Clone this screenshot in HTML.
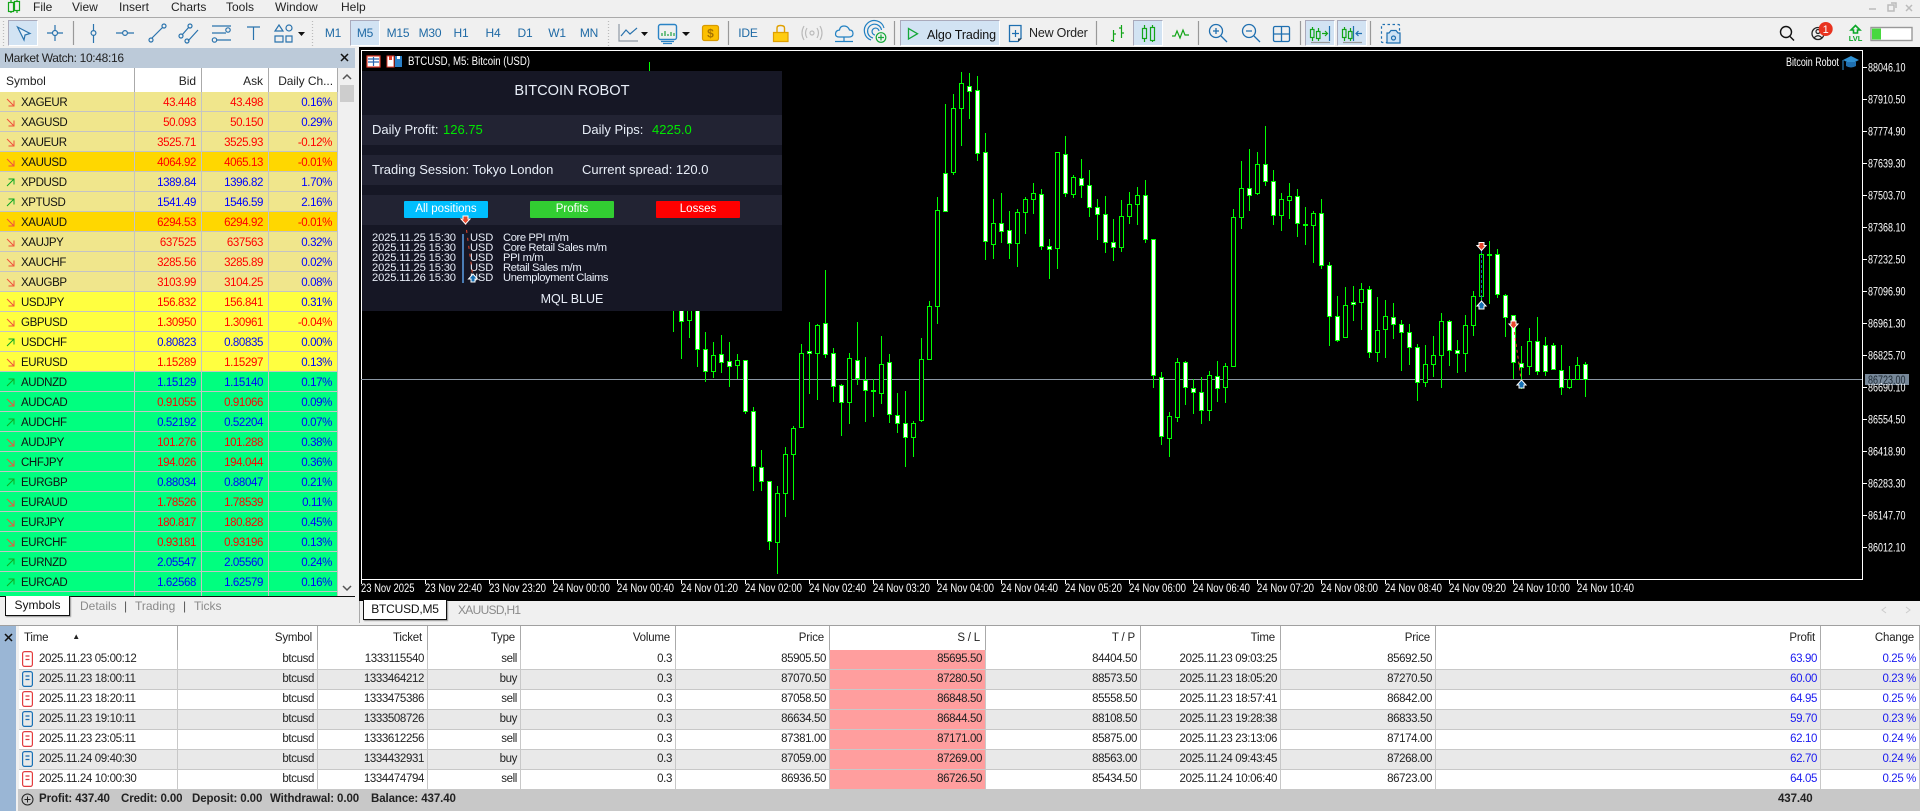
<!DOCTYPE html>
<html lang="en"><head><meta charset="utf-8"><title>MetaTrader 5 - BTCUSD,M5</title>
<style>
html,body{margin:0;padding:0;width:1920px;height:811px;overflow:hidden;background:#f0f0f0;font-family:"Liberation Sans",Arial,sans-serif;color:#1a1a1a}
.abs,.m,.tf{position:absolute}
.m{top:0;line-height:15px;font-size:12px;color:#222}
.tf{top:25px;line-height:16px;font-size:12px;color:#1f6aa5;transform:translateX(-50%);letter-spacing:-.2px}
.btn{position:absolute;top:20px;height:26px;background:#d2e3f3;border-top:1px solid #aab;border-left:1px solid #aab;border-right:1px solid #fff;border-bottom:1px solid #fff;box-sizing:border-box}
table{border-collapse:separate;border-spacing:0;table-layout:fixed;position:absolute}
td,th{box-sizing:border-box;padding:0;white-space:nowrap;overflow:hidden;font-weight:normal;font-size:11.5px;letter-spacing:-.38px}
#mw{left:0;top:68px;width:338px}
#mw th{height:24px;line-height:20px;background:#fff;border-right:1px solid #aaa;text-align:right;padding-right:5px;padding-top:1px;color:#222;font-size:12px;letter-spacing:-.05px}
#mw th:first-child{text-align:left;padding-left:6px}
#mw th:last-child{padding-right:4px}
#mw td{height:20px;line-height:16px;border-right:1px solid #c4c4c4;border-bottom:1px solid #c4c4c4;text-align:right;padding-right:5px;padding-top:3px;color:#00f}
#mw td:first-child{text-align:left;padding-left:6px;color:#111}
#mw tr.k td{background:#f0e68c}#mw tr.g td{background:#ffd700}#mw tr.y td{background:#ffff40}#mw tr.s td{background:#00ff7f}
#mw td.r{color:#f00}
#mw svg{width:9px;height:9px;vertical-align:-1px;margin-right:6px}
#tr{left:19px;top:626px;width:1901px}
#tr th{height:24px;background:#fff;border-right:1px solid #aaa;text-align:right;padding-right:5px;color:#222;border-bottom:0;letter-spacing:-.2px}
#tr th:first-child{text-align:left;padding-left:5px}
#tr td{height:20px;line-height:19px;background:#fff;border-right:1px solid #c8c8c8;border-bottom:1px solid #c8c8c8;text-align:right;padding-right:3px;color:#222}
#tr tr.e td{background:#e9e9e9}
#tr td:first-child{text-align:left;padding-left:3px}
#tr td.sl,#tr tr.e td.sl{background:#ff9e9e}
#tr td.b{color:#1a1af0}
#tr svg{width:11px;height:16px;vertical-align:middle;margin-right:6px}
.sum{position:absolute;top:789px;height:22px;line-height:21px;font-size:11.5px;font-weight:bold;letter-spacing:-.1px;color:#222}
.p{position:absolute;white-space:nowrap;color:#e8eef8;font-size:13px;line-height:16px}
.pb{position:absolute;top:201px;width:84px;height:17px;line-height:17px;text-align:center;color:#fff;font-size:11.5px;border-radius:1px}
.n{position:absolute;white-space:nowrap;color:#e8eef8;font-size:11.2px;line-height:10px;height:10px;letter-spacing:-.15px}
.n.nm{letter-spacing:-.39px}
.tab{position:absolute;font-size:12px;color:#8a8a8a;line-height:16px;top:598px}
</style></head><body>
<svg width="0" height="0" style="position:absolute"><defs>
<g id="dn" fill="none" stroke="#f0503c" stroke-width="1"><path d="M1 1L8 8M2.500 8H8V2.500"/></g>
<g id="up" fill="none" stroke="#10a820" stroke-width="1"><path d="M1 8L8 1M2.500 1H8V6.500"/></g>
<g id="rd" fill="none" stroke="#e23c3c" stroke-width="1.200"><rect x=".6" y=".6" width="9.800" height="14.800" rx="2"/><path d="M3.500 5H7.500M3.500 8.500H7.500"/></g>
<g id="bd" fill="none" stroke="#1670b4" stroke-width="1.200"><rect x=".6" y=".6" width="9.800" height="14.800" rx="2"/><path d="M3.500 5H7.500M3.500 8.500H7.500"/></g>
</defs></svg>

<!-- Menu -->
<span class="m" style="left:33px">File</span><span class="m" style="left:72px">View</span><span class="m" style="left:119px">Insert</span><span class="m" style="left:171px">Charts</span><span class="m" style="left:226px">Tools</span><span class="m" style="left:275px">Window</span><span class="m" style="left:341px">Help</span>
<div class="abs" style="left:0;top:17px;width:1920px;height:1px;background:#aaa"></div>

<!-- toolbar backgrounds -->
<div class="btn" style="left:8px;width:30px"></div>
<div class="btn" style="left:350px;width:30px"></div>
<div class="btn" style="left:900px;width:100px"></div>
<div class="btn" style="left:1133px;width:30px"></div>
<div class="btn" style="left:1305px;width:30px"></div>
<div class="btn" style="left:1337px;width:30px"></div>

<span class="tf" style="left:333px">M1</span><span class="tf" style="left:365px">M5</span><span class="tf" style="left:398px">M15</span><span class="tf" style="left:430px">M30</span><span class="tf" style="left:461px">H1</span><span class="tf" style="left:493px">H4</span><span class="tf" style="left:525px">D1</span><span class="tf" style="left:557px">W1</span><span class="tf" style="left:589px">MN</span>
<span class="tf" style="left:748px">IDE</span>
<span class="abs" style="left:927px;top:27px;font-size:12.5px;line-height:17px;color:#111;letter-spacing:-.1px">Algo Trading</span>
<span class="abs" style="left:1029px;top:25px;font-size:12.5px;line-height:17px;color:#222;letter-spacing:-.2px">New Order</span>

<svg class="abs" style="left:0;top:0" width="1920" height="48" fill="none" stroke-width="1.200">
<!-- logo -->
<g stroke="#12a518"><path d="M11 0V13M17 0V13"/><rect x="8.500" y="2.500" width="5" height="9" fill="#f0f0f0"/><rect x="14.500" y="1.500" width="5" height="9" fill="#f0f0f0"/></g>
<!-- window buttons -->
<g stroke="#bbb" stroke-width="1.500"><path d="M1869 9H1876"/><rect x="1888" y="5" width="6" height="6"/><path d="M1891 3H1896V8"/><path d="M1906 5L1912 11M1912 5L1906 11"/></g>
<!-- grips -->
<g stroke="#bbb" stroke-dasharray="1 2"><path d="M3.500 21V46M312.500 21V46M608.500 21V46"/></g>
<g stroke="#999"><path d="M73.500 21V45M728.500 21V45M894.500 21V45M1096.500 21V45M1198.500 21V45M1300.500 21V45M1370.500 21V45"/></g>
<g stroke="#2a73ad">
<path d="M17.500 27L30 33.500 25 35 24 40z" fill="#e3eef8"/>
<path d="M47 33H63M55 25V41"/><circle cx="55" cy="33" r="2.500" fill="#f0f0f0"/>
<path d="M93.500 24V43"/><circle cx="93.500" cy="33" r="2.400" fill="#f0f0f0"/>
<path d="M116 33H134"/><circle cx="125" cy="33" r="2.400" fill="#f0f0f0"/>
<path d="M152 38L163 27"/><circle cx="151" cy="40" r="2" fill="#f0f0f0"/><circle cx="164" cy="26" r="2" fill="#f0f0f0"/>
<path d="M182 35L189 27M188 41L198 30"/><circle cx="181" cy="36" r="2"/><circle cx="190" cy="26" r="2"/><circle cx="187" cy="41" r="2"/>
<path d="M212 26H231M212 33H226M217 40H231"/><circle cx="228" cy="30" r="2.200"/><circle cx="214.500" cy="40" r="2.200"/>
<path d="M247 27H260M253.500 27V40"/>
<path d="M279 25L283 31H275zM275 36H283V42H275zM286 36H292V42H286z"/><circle cx="289" cy="28" r="3"/>
</g>
<g fill="#111"><path d="M298 32H305L301.500 36zM641 32H648L644.500 36zM682 32H690L686 36z"/></g>
<!-- chart type -->
<g stroke="#8f9aa5"><path d="M619 24V41H638"/></g><path d="M621 36L626 30 630 34 637 28" stroke="#2a73ad"/>
<rect x="658.500" y="24.500" width="18" height="15" rx="2" stroke="#2a83c5" stroke-width="1.400"/><path d="M661 41.500H674M663 43.500H672" stroke="#2a83c5"/><path d="M662 36V33M665 36V31M668 36V34M671 36V32M674 36V33" stroke="#20a040"/>
<rect x="702.500" y="25.500" width="16" height="15" rx="2" fill="#fcc000" stroke="#d89a00"/><text x="710.500" y="37.500" font-family="Liberation Sans" font-size="12" font-weight="bold" fill="#a87400" stroke="none" text-anchor="middle">$</text>
<path d="M773.500 32.500H788V41.500H773.500z" fill="#ffcc10" stroke="#e0a000"/><path d="M777 33V28Q777 25.500 780.500 25.500Q784.500 25.500 784.500 28V33" stroke="#e0a000" stroke-width="1.400"/>
<g stroke="#bbb"><circle cx="812" cy="33" r="2"/><path d="M807 28Q804 33 807 38M817 28Q820 33 817 38M804 26Q800 33 804 40M820 26Q824 33 820 40"/></g>
<g stroke="#2180c2"><path d="M839 37H849Q853 37 853 33.500 853 30 849.500 30 848 26 844 26 840 26 839.500 30 835.500 30.500 835.500 34 835.500 37 839 37z"/><path d="M844 37V41M835 41.500H853"/></g>
<g stroke="#2180c2"><path d="M871 40A10 10 0 1 1 884 28M873 38A7 7 0 1 1 881.500 30M875 35A3.500 3.500 0 1 1 879 31"/></g><circle cx="881" cy="37.500" r="4.800" stroke="#14a838" fill="#f0f0f0"/><path d="M881 34.500V40.500M878 37.500H884" stroke="#14a838"/>
<path d="M908.500 28.500V39L917.500 33.700z" stroke="#14a838" stroke-width="1.300"/>
<path d="M1009.500 25.500H1021V38L1018 41.500H1009.500z" stroke="#1f6fb0" stroke-width="1.300"/><path d="M1015.500 30V37M1012 33.500H1019" stroke="#1f6fb0"/><path d="M1018 42L1022 38.500H1018z" fill="#26445e"/>
<g stroke="#12a518"><path d="M1113.500 30V42M1111 40.500H1113.500M1113.500 34H1116M1121.500 25V38M1119 28H1121.500M1121.500 33H1124"/><path d="M1144.500 25V42M1152.500 25V42"/><rect x="1142.500" y="28.500" width="4" height="10" fill="#d2e3f3"/><rect x="1150.500" y="27.500" width="4" height="13" fill="#d2e3f3"/><path d="M1172 36H1175L1177 31 1180 38 1183 30 1185 35H1189"/></g>
<g stroke="#1f6fb0" stroke-width="1.300"><circle cx="1216" cy="31" r="6.500"/><path d="M1221 36L1227 42M1213 31H1219M1216 28V34"/><circle cx="1249" cy="31" r="6.500"/><path d="M1254 36L1260 42M1246 31H1252"/><rect x="1273.500" y="26.500" width="16" height="15" rx="1.500"/><path d="M1281.500 26.500V41.500M1273.500 34H1289.500"/></g>
<g stroke="#12a518"><path d="M1312.500 27V41M1318.500 28V41"/><rect x="1310.500" y="29.500" width="3.500" height="8" fill="#d2e3f3"/><rect x="1316.500" y="31.500" width="3.500" height="7" fill="#d2e3f3"/><path d="M1322 33.500H1327M1325 31L1327.500 33.500 1325 36"/></g><path d="M1329.500 26V41" stroke="#1f6fb0"/><path d="M1311 42.500H1330" stroke="#999"/>
<g stroke="#12a518"><path d="M1344.500 27V41M1350.500 28V41"/><rect x="1342.500" y="29.500" width="3.500" height="8" fill="#d2e3f3"/><rect x="1348.500" y="31.500" width="3.500" height="7" fill="#d2e3f3"/></g><path d="M1353.500 26V41M1356 33.500H1362M1358.500 31L1356 33.500 1358.500 36" stroke="#1f6fb0"/><path d="M1343 42.500H1362" stroke="#999"/>
<rect x="1381.500" y="24.500" width="18" height="18" rx="1" stroke="#1f6fb0" stroke-dasharray="2.500 2.500"/><path d="M1387 33H1389L1391 30.500H1396L1398 33H1400V43H1387z" fill="#cfe3f4" stroke="#1f6fb0"/><circle cx="1393.500" cy="38" r="2" stroke="#1f6fb0"/>
<circle cx="1786" cy="32" r="5.500" stroke="#111" stroke-width="1.400"/><path d="M1790 36.500L1794 40.500" stroke="#111" stroke-width="1.400"/>
<circle cx="1818" cy="33.500" r="6" stroke="#222" stroke-width="1.300"/><circle cx="1818" cy="31.500" r="2" stroke="#222"/><path d="M1814 38Q1818 33.500 1822 38" stroke="#222"/>
<circle cx="1825.700" cy="29" r="7" fill="#e8331f" stroke="none"/><text x="1825.700" y="33" font-family="Liberation Sans" font-size="11" fill="#fff" stroke="none" text-anchor="middle">1</text>
<path d="M1855.500 25.500L1851 30H1853.500V33H1857.500V30H1860z" stroke="#0ca828" stroke-width="1.600"/>
<text x="1855.500" y="41" font-family="Liberation Sans" font-size="7.500" font-weight="bold" fill="#0ca828" stroke="none" text-anchor="middle">LVL</text>
<rect x="1871" y="27.500" width="41" height="13" fill="#fff" stroke="#999" stroke-width="1.400"/><rect x="1872" y="28.500" width="9" height="11" fill="#47d83e" stroke="none"/>
</svg>

<!-- Market watch -->
<div class="abs" style="left:0;top:48px;width:355px;height:20px;background:#bccad9;font-size:12px;line-height:20px;text-indent:4px;color:#222;letter-spacing:-.33px">Market Watch: 10:48:16</div>
<svg class="abs" style="left:340px;top:53px" width="10" height="10"><path d="M1 1L8 8M8 1L1 8" stroke="#111" stroke-width="1.500"/></svg>
<div class="abs" style="left:0;top:68px;width:338px;height:528px;overflow:hidden">
<table id="mw" style="left:0;top:0">
<colgroup><col style="width:135px"><col style="width:67px"><col style="width:67px"><col style="width:69px"></colgroup>
<tr><th>Symbol</th><th>Bid</th><th>Ask</th><th>Daily Ch...</th></tr>
<tr class="k"><td><svg><use href="#dn"/></svg>XAGEUR</td><td class="r">43.448</td><td class="r">43.498</td><td>0.16%</td></tr>
<tr class="k"><td><svg><use href="#dn"/></svg>XAGUSD</td><td class="r">50.093</td><td class="r">50.150</td><td>0.29%</td></tr>
<tr class="k"><td><svg><use href="#dn"/></svg>XAUEUR</td><td class="r">3525.71</td><td class="r">3525.93</td><td class="r">-0.12%</td></tr>
<tr class="g"><td><svg><use href="#dn"/></svg>XAUUSD</td><td class="r">4064.92</td><td class="r">4065.13</td><td class="r">-0.01%</td></tr>
<tr class="k"><td><svg><use href="#up"/></svg>XPDUSD</td><td>1389.84</td><td>1396.82</td><td>1.70%</td></tr>
<tr class="k"><td><svg><use href="#up"/></svg>XPTUSD</td><td>1541.49</td><td>1546.59</td><td>2.16%</td></tr>
<tr class="g"><td><svg><use href="#dn"/></svg>XAUAUD</td><td class="r">6294.53</td><td class="r">6294.92</td><td class="r">-0.01%</td></tr>
<tr class="k"><td><svg><use href="#dn"/></svg>XAUJPY</td><td class="r">637525</td><td class="r">637563</td><td>0.32%</td></tr>
<tr class="k"><td><svg><use href="#dn"/></svg>XAUCHF</td><td class="r">3285.56</td><td class="r">3285.89</td><td>0.02%</td></tr>
<tr class="k"><td><svg><use href="#dn"/></svg>XAUGBP</td><td class="r">3103.99</td><td class="r">3104.25</td><td>0.08%</td></tr>
<tr class="y"><td><svg><use href="#dn"/></svg>USDJPY</td><td class="r">156.832</td><td class="r">156.841</td><td>0.31%</td></tr>
<tr class="y"><td><svg><use href="#dn"/></svg>GBPUSD</td><td class="r">1.30950</td><td class="r">1.30961</td><td class="r">-0.04%</td></tr>
<tr class="y"><td><svg><use href="#up"/></svg>USDCHF</td><td>0.80823</td><td>0.80835</td><td>0.00%</td></tr>
<tr class="y"><td><svg><use href="#dn"/></svg>EURUSD</td><td class="r">1.15289</td><td class="r">1.15297</td><td>0.13%</td></tr>
<tr class="s"><td><svg><use href="#up"/></svg>AUDNZD</td><td>1.15129</td><td>1.15140</td><td>0.17%</td></tr>
<tr class="s"><td><svg><use href="#dn"/></svg>AUDCAD</td><td class="r">0.91055</td><td class="r">0.91066</td><td>0.09%</td></tr>
<tr class="s"><td><svg><use href="#up"/></svg>AUDCHF</td><td>0.52192</td><td>0.52204</td><td>0.07%</td></tr>
<tr class="s"><td><svg><use href="#dn"/></svg>AUDJPY</td><td class="r">101.276</td><td class="r">101.288</td><td>0.38%</td></tr>
<tr class="s"><td><svg><use href="#dn"/></svg>CHFJPY</td><td class="r">194.026</td><td class="r">194.044</td><td>0.36%</td></tr>
<tr class="s"><td><svg><use href="#up"/></svg>EURGBP</td><td>0.88034</td><td>0.88047</td><td>0.21%</td></tr>
<tr class="s"><td><svg><use href="#dn"/></svg>EURAUD</td><td class="r">1.78526</td><td class="r">1.78539</td><td>0.11%</td></tr>
<tr class="s"><td><svg><use href="#dn"/></svg>EURJPY</td><td class="r">180.817</td><td class="r">180.828</td><td>0.45%</td></tr>
<tr class="s"><td><svg><use href="#dn"/></svg>EURCHF</td><td class="r">0.93181</td><td class="r">0.93196</td><td>0.13%</td></tr>
<tr class="s"><td><svg><use href="#up"/></svg>EURNZD</td><td>2.05547</td><td>2.05560</td><td>0.24%</td></tr>
<tr class="s"><td><svg><use href="#up"/></svg>EURCAD</td><td>1.62568</td><td>1.62579</td><td>0.16%</td></tr>
<tr class="s"><td>&nbsp;</td><td>&nbsp;</td><td>&nbsp;</td><td>&nbsp;</td></tr>
</table></div>
<div class="abs" style="left:340px;top:85px;width:14px;height:17px;background:#cdcdcd"></div>
<svg class="abs" style="left:342px;top:72px" width="10" height="10"><path d="M1 7L5 3 9 7" stroke="#555" stroke-width="1.500" fill="none"/></svg>
<svg class="abs" style="left:342px;top:583px" width="10" height="10"><path d="M1 3L5 7 9 3" stroke="#555" stroke-width="1.500" fill="none"/></svg>

<!-- left tabs -->
<div class="abs" style="left:0;top:596px;width:355px;height:1px;background:#111"></div>
<div class="abs" style="left:5px;top:596px;width:65px;height:20px;box-sizing:border-box;background:#fff;border:1px solid #111;border-top:0;box-shadow:1px 1px 1px #999;text-align:center;font-size:12px;line-height:18px;color:#111">Symbols</div>
<span class="tab" style="left:80px">Details</span><span class="tab" style="left:124px;color:#555">|</span><span class="tab" style="left:135px">Trading</span><span class="tab" style="left:183px;color:#555">|</span><span class="tab" style="left:194px">Ticks</span>

<!-- Chart -->
<svg class="abs" style="left:359px;top:47px" width="1561" height="554" viewBox="359 47 1561 554" shape-rendering="crispEdges">
<rect x="359" y="47" width="1561" height="554" fill="#000"/>
<path d="M361.500 50.500H1862.500V579.500H361.500z" fill="none" stroke="#fff" stroke-width="1"/>
<path d="M361 379.500H1862" stroke="#8a96a3"/>
<path fill="none" stroke="#00ff00" d="M649.500 62V71M673.500 300V332M681.500 300V359M689.500 300V338M697.500 300V367M705.500 332V382M713.500 342V378M721.500 335V373M729.500 342V387M737.500 354V379M745.500 360V414M753.500 407V491M761.500 450V491M769.500 481V550M777.500 486V574M785.500 447V517M793.500 426V500M801.500 344V428M809.500 322V394M817.500 324V400M825.500 270V358M833.500 348V402M841.500 384V436M849.500 353V424M857.500 322V385M865.500 357V422M873.500 379V417M881.500 336V404M889.500 354V423M897.500 393V433M905.500 391V467M913.500 421V457M921.500 338V422M929.500 301V360M937.500 197V324M945.500 104V212M953.500 94V175M961.500 72V146M969.500 73V119M977.500 76V161M985.500 133V260M993.500 199V259M1001.500 193V243M1009.500 211V259M1017.500 209V267M1025.500 197V234M1033.500 183V214M1041.500 189V250M1049.500 239V279M1057.500 152V269M1065.500 136V197M1073.500 175V198M1081.500 159V198M1089.500 170V217M1097.500 199V240M1105.500 196V253M1113.500 219V261M1121.500 200V252M1129.500 192V224M1137.500 187V225M1145.500 180V243M1153.500 239V388M1161.500 372V445M1169.500 412V457M1177.500 358V422M1185.500 361V405M1193.500 379V414M1201.500 377V424M1209.500 371V421M1217.500 361V402M1225.500 363V403M1233.500 209V367M1241.500 161V229M1249.500 149V211M1257.500 152V195M1265.500 126V186M1273.500 170V225M1281.500 193V231M1289.500 183V219M1297.500 189V237M1305.500 207V245M1313.500 211V263M1321.500 199V269M1329.500 262V346M1337.500 296V342M1345.500 287V338M1353.500 286V321M1361.500 283V330M1369.500 286V358M1377.500 297V362M1385.500 300V358M1393.500 303V339M1401.500 320V371M1409.500 324V365M1417.500 344V401M1425.500 345V387M1433.500 336V377M1441.500 313V388M1449.500 320V366M1457.500 340V373M1465.500 315V372M1473.500 291V336M1481.500 250V308M1489.500 241V304M1497.500 249V298M1505.500 294V337M1513.500 315V379M1521.500 346V389M1529.500 328V375M1537.500 317V375M1545.500 337V376M1553.500 343V370M1561.500 345V395M1569.500 366V389M1577.500 357V380M1585.500 362V397"/>
<path fill="#000" stroke="#00ff00" d="M687.500 300.500h4V320.500h-4zM711.500 355.500h4V371.500h-4zM735.500 360.500h4V365.500h-4zM775.500 493.500h4V542.500h-4zM783.500 454.500h4V493.500h-4zM791.500 428.500h4V454.500h-4zM799.500 353.500h4V427.500h-4zM815.500 325.500h4V353.500h-4zM847.500 358.500h4V402.500h-4zM879.500 364.500h4V393.500h-4zM911.500 423.500h4V437.500h-4zM919.500 359.500h4V420.500h-4zM927.500 306.500h4V359.500h-4zM935.500 210.500h4V306.500h-4zM951.500 108.500h4V172.500h-4zM959.500 83.500h4V108.500h-4zM991.500 223.500h4V244.500h-4zM1015.500 212.500h4V243.500h-4zM1023.500 199.500h4V212.500h-4zM1031.500 193.500h4V199.500h-4zM1055.500 152.500h4V248.500h-4zM1071.500 177.500h4V194.500h-4zM1119.500 216.500h4V247.500h-4zM1127.500 204.500h4V216.500h-4zM1135.500 195.500h4V204.500h-4zM1167.500 416.500h4V438.500h-4zM1175.500 362.500h4V417.500h-4zM1207.500 375.500h4V410.500h-4zM1223.500 366.500h4V387.500h-4zM1231.500 217.500h4V366.500h-4zM1239.500 188.500h4V217.500h-4zM1255.500 164.500h4V193.500h-4zM1279.500 199.500h4V215.500h-4zM1287.500 196.500h4V200.500h-4zM1311.500 213.500h4V225.500h-4zM1343.500 305.500h4V337.500h-4zM1359.500 289.500h4V302.500h-4zM1375.500 330.500h4V352.500h-4zM1383.500 316.500h4V329.500h-4zM1423.500 364.500h4V382.500h-4zM1431.500 355.500h4V364.500h-4zM1439.500 321.500h4V355.500h-4zM1463.500 325.500h4V353.500h-4zM1471.500 296.500h4V325.500h-4zM1479.500 254.500h4V296.500h-4zM1527.500 341.500h4V366.500h-4zM1567.500 379.500h4V387.500h-4zM1575.500 365.500h4V379.500h-4z"/>
<path fill="#fff" stroke="#00ff00" d="M679.500 300.500h4V321.500h-4zM695.500 300.500h4V349.500h-4zM703.500 349.500h4V371.500h-4zM719.500 354.500h4V362.500h-4zM727.500 361.500h4V366.500h-4zM743.500 360.500h4V411.500h-4zM751.500 411.500h4V466.500h-4zM759.500 467.500h4V481.500h-4zM767.500 481.500h4V541.500h-4zM807.500 351.500h4V353.500h-4zM823.500 323.500h4V354.500h-4zM831.500 353.500h4V386.500h-4zM839.500 385.500h4V402.500h-4zM855.500 360.500h4V378.500h-4zM863.500 380.500h4V390.500h-4zM871.500 390.500h4V391.500h-4zM887.500 362.500h4V414.500h-4zM895.500 415.500h4V423.500h-4zM903.500 423.500h4V437.500h-4zM943.500 173.500h4V211.500h-4zM967.500 86.500h4V91.500h-4zM975.500 90.500h4V153.500h-4zM983.500 152.500h4V241.500h-4zM999.500 223.500h4V231.500h-4zM1007.500 230.500h4V243.500h-4zM1039.500 194.500h4V246.500h-4zM1047.500 246.500h4V249.500h-4zM1063.500 154.500h4V193.500h-4zM1079.500 178.500h4V185.500h-4zM1087.500 185.500h4V207.500h-4zM1095.500 207.500h4V214.500h-4zM1103.500 214.500h4V242.500h-4zM1111.500 242.500h4V247.500h-4zM1143.500 195.500h4V239.500h-4zM1151.500 239.500h4V375.500h-4zM1159.500 377.500h4V436.500h-4zM1183.500 362.500h4V387.500h-4zM1191.500 388.500h4V392.500h-4zM1199.500 392.500h4V410.500h-4zM1215.500 376.500h4V388.500h-4zM1247.500 188.500h4V195.500h-4zM1263.500 164.500h4V181.500h-4zM1271.500 181.500h4V215.500h-4zM1295.500 196.500h4V223.500h-4zM1303.500 224.500h4V225.500h-4zM1319.500 213.500h4V265.500h-4zM1327.500 265.500h4V316.500h-4zM1335.500 316.500h4V340.500h-4zM1351.500 302.500h4V304.500h-4zM1367.500 289.500h4V352.500h-4zM1391.500 317.500h4V324.500h-4zM1399.500 324.500h4V332.500h-4zM1407.500 332.500h4V347.500h-4zM1415.500 347.500h4V382.500h-4zM1447.500 321.500h4V350.500h-4zM1455.500 350.500h4V353.500h-4zM1487.500 254.500h4V255.500h-4zM1495.500 254.500h4V294.500h-4zM1503.500 295.500h4V317.500h-4zM1511.500 315.500h4V362.500h-4zM1519.500 363.500h4V367.500h-4zM1535.500 341.500h4V371.500h-4zM1543.500 345.500h4V371.500h-4zM1551.500 345.500h4V369.500h-4zM1559.500 370.500h4V387.500h-4zM1583.500 364.500h4V379.500h-4z"/>
<!-- axis ticks -->
<path stroke="#fff" d="M1863 67.500h4M1863 99.500h4M1863 131.500h4M1863 163.500h4M1863 195.500h4M1863 227.500h4M1863 259.500h4M1863 291.500h4M1863 323.500h4M1863 355.500h4M1863 387.500h4M1863 419.500h4M1863 451.500h4M1863 483.500h4M1863 515.500h4M1863 547.500h4M361.500 580v4M425.500 580v4M489.500 580v4M553.500 580v4M617.500 580v4M681.500 580v4M745.500 580v4M809.500 580v4M873.500 580v4M937.500 580v4M1001.500 580v4M1065.500 580v4M1129.500 580v4M1193.500 580v4M1257.500 580v4M1321.500 580v4M1385.500 580v4M1449.500 580v4M1513.500 580v4M1577.500 580v4"/>
<rect x="1865" y="374" width="44" height="11" fill="#778899"/>
<g font-family="Liberation Sans" font-size="11.500" fill="#fff" shape-rendering="auto">
<text x="1868" y="71.500" textLength="37.500" lengthAdjust="spacingAndGlyphs">88046.10</text>
<text x="1868" y="103.500" textLength="37.500" lengthAdjust="spacingAndGlyphs">87910.50</text>
<text x="1868" y="135.500" textLength="37.500" lengthAdjust="spacingAndGlyphs">87774.90</text>
<text x="1868" y="167.500" textLength="37.500" lengthAdjust="spacingAndGlyphs">87639.30</text>
<text x="1868" y="199.500" textLength="37.500" lengthAdjust="spacingAndGlyphs">87503.70</text>
<text x="1868" y="231.500" textLength="37.500" lengthAdjust="spacingAndGlyphs">87368.10</text>
<text x="1868" y="263.500" textLength="37.500" lengthAdjust="spacingAndGlyphs">87232.50</text>
<text x="1868" y="295.500" textLength="37.500" lengthAdjust="spacingAndGlyphs">87096.90</text>
<text x="1868" y="327.500" textLength="37.500" lengthAdjust="spacingAndGlyphs">86961.30</text>
<text x="1868" y="359.500" textLength="37.500" lengthAdjust="spacingAndGlyphs">86825.70</text>
<text x="1868" y="391.500" textLength="37.500" lengthAdjust="spacingAndGlyphs">86690.10</text>
<text x="1868" y="423.500" textLength="37.500" lengthAdjust="spacingAndGlyphs">86554.50</text>
<text x="1868" y="455.500" textLength="37.500" lengthAdjust="spacingAndGlyphs">86418.90</text>
<text x="1868" y="487.500" textLength="37.500" lengthAdjust="spacingAndGlyphs">86283.30</text>
<text x="1868" y="519.500" textLength="37.500" lengthAdjust="spacingAndGlyphs">86147.70</text>
<text x="1868" y="551.500" textLength="37.500" lengthAdjust="spacingAndGlyphs">86012.10</text>
<text x="1868" y="384" fill="#1e2a36" textLength="37.500" lengthAdjust="spacingAndGlyphs">86723.00</text>
<text x="361" y="592" textLength="53.500" lengthAdjust="spacingAndGlyphs">23 Nov 2025</text>
<text x="425" y="592" textLength="57" lengthAdjust="spacingAndGlyphs">23 Nov 22:40</text>
<text x="489" y="592" textLength="57" lengthAdjust="spacingAndGlyphs">23 Nov 23:20</text>
<text x="553" y="592" textLength="57" lengthAdjust="spacingAndGlyphs">24 Nov 00:00</text>
<text x="617" y="592" textLength="57" lengthAdjust="spacingAndGlyphs">24 Nov 00:40</text>
<text x="681" y="592" textLength="57" lengthAdjust="spacingAndGlyphs">24 Nov 01:20</text>
<text x="745" y="592" textLength="57" lengthAdjust="spacingAndGlyphs">24 Nov 02:00</text>
<text x="809" y="592" textLength="57" lengthAdjust="spacingAndGlyphs">24 Nov 02:40</text>
<text x="873" y="592" textLength="57" lengthAdjust="spacingAndGlyphs">24 Nov 03:20</text>
<text x="937" y="592" textLength="57" lengthAdjust="spacingAndGlyphs">24 Nov 04:00</text>
<text x="1001" y="592" textLength="57" lengthAdjust="spacingAndGlyphs">24 Nov 04:40</text>
<text x="1065" y="592" textLength="57" lengthAdjust="spacingAndGlyphs">24 Nov 05:20</text>
<text x="1129" y="592" textLength="57" lengthAdjust="spacingAndGlyphs">24 Nov 06:00</text>
<text x="1193" y="592" textLength="57" lengthAdjust="spacingAndGlyphs">24 Nov 06:40</text>
<text x="1257" y="592" textLength="57" lengthAdjust="spacingAndGlyphs">24 Nov 07:20</text>
<text x="1321" y="592" textLength="57" lengthAdjust="spacingAndGlyphs">24 Nov 08:00</text>
<text x="1385" y="592" textLength="57" lengthAdjust="spacingAndGlyphs">24 Nov 08:40</text>
<text x="1449" y="592" textLength="57" lengthAdjust="spacingAndGlyphs">24 Nov 09:20</text>
<text x="1513" y="592" textLength="57" lengthAdjust="spacingAndGlyphs">24 Nov 10:00</text>
<text x="1577" y="592" textLength="57" lengthAdjust="spacingAndGlyphs">24 Nov 10:40</text>
<text x="408" y="65" textLength="122" lengthAdjust="spacingAndGlyphs">BTCUSD, M5:  Bitcoin (USD)</text>
<text x="1786" y="66" textLength="53" lengthAdjust="spacingAndGlyphs">Bitcoin Robot</text>
</g>
<!-- title icons -->
<g shape-rendering="auto">
<rect x="367" y="56" width="13" height="11" fill="#fff" stroke="#e23c2c" stroke-width="1.200"/><path d="M368 59H379M368 62H379M373.500 57V66" stroke="#2a66b0" stroke-width="1.200"/>
<rect x="387" y="56" width="7" height="11" fill="#fff" stroke="#e23c2c"/><rect x="395" y="56" width="7" height="11" fill="#2a80c8"/><path d="M389 56V60H392V56" fill="#e23c2c"/><rect x="397" y="56" width="3" height="3" fill="#fff"/>
<path d="M1851 56L1859 60 1851 64 1843 60z" fill="#2f8fd0"/><path d="M1846 62V66Q1851 69 1856 66V62" fill="#2070b0"/><path d="M1843 60V70" stroke="#2f8fd0"/>
</g>
</svg>

<!-- Info panel -->
<div class="abs" style="left:362px;top:71px;width:420px;height:240px;background:#161725"></div>
<div class="abs" style="left:362px;top:115px;width:420px;height:30px;background:#222333"></div>
<div class="abs" style="left:362px;top:155px;width:420px;height:30px;background:#222333"></div>
<div class="abs" style="left:362px;top:195px;width:420px;height:30px;background:#222333"></div>
<span class="p" style="left:362px;width:420px;top:83px;text-align:center;font-size:14.600px">BITCOIN ROBOT</span>
<span class="p" style="left:372px;top:122px">Daily Profit:</span><span class="p" style="left:443px;top:122px;color:#00e800">126.75</span>
<span class="p" style="left:582px;top:122px">Daily Pips:</span><span class="p" style="left:652px;top:122px;color:#00e800">4225.0</span>
<span class="p" style="left:372px;top:162px">Trading Session: Tokyo London</span>
<span class="p" style="left:582px;top:162px">Current spread: 120.0</span>
<div class="pb" style="left:404px;background:#00bfff">All positions</div>
<div class="pb" style="left:530px;background:#32cd32">Profits</div>
<div class="pb" style="left:656px;background:#f00">Losses</div>
<span class="n" style="left:372px;top:233px">2025.11.25 15:30</span><span class="n" style="left:470px;top:233px">USD</span><span class="n nm" style="left:503px;top:233px">Core PPI m/m</span>
<span class="n" style="left:372px;top:243px">2025.11.25 15:30</span><span class="n" style="left:470px;top:243px">USD</span><span class="n nm" style="left:503px;top:243px">Core Retail Sales m/m</span>
<span class="n" style="left:372px;top:253px">2025.11.25 15:30</span><span class="n" style="left:470px;top:253px">USD</span><span class="n nm" style="left:503px;top:253px">PPI m/m</span>
<span class="n" style="left:372px;top:263px">2025.11.25 15:30</span><span class="n" style="left:470px;top:263px">USD</span><span class="n nm" style="left:503px;top:263px">Retail Sales m/m</span>
<span class="n" style="left:372px;top:273px">2025.11.26 15:30</span><span class="n" style="left:470px;top:273px">USD</span><span class="n nm" style="left:503px;top:273px">Unemployment Claims</span>
<span class="p" style="left:362px;width:420px;top:291px;text-align:center;font-size:12.500px">MQL BLUE</span>

<!-- markers overlay -->
<svg class="abs" style="left:0;top:0" width="1920" height="600">
<path d="M463 234V283" stroke="#4a7db5" stroke-width="2"/>
<path d="M465.500 222L473 278" stroke="#e8482c" stroke-dasharray="3 5"/>
<path d="M1481.500 250V303" stroke="#1670b4" stroke-dasharray="3 2"/>
<path d="M1513.500 326L1521.500 382" stroke="#e8482c" stroke-dasharray="3 3"/>
<g stroke="#fff" stroke-width="1"><path d="M463 216H468V219H470L465.500 224 461 219H463z" fill="#e8482c"/><path d="M1479 242.500H1484V245.500H1486L1481.500 250.500 1477 245.500H1479z" fill="#e8482c"/><path d="M1511 321H1516V324H1518L1513.500 329 1509 324H1511z" fill="#e8482c"/>
<path d="M473 274L477.500 279H475V282H471V279H468.500z" fill="#1670b4"/><path d="M1481.500 301L1486 306H1484V309H1479V306H1477z" fill="#1670b4"/><path d="M1521.500 380L1526 385H1524V388H1519V385H1517z" fill="#1670b4"/></g>
</svg>

<!-- chart tabs -->
<div class="abs" style="left:363px;top:600px;width:84px;height:20px;box-sizing:border-box;background:#fff;border:1px solid #111;border-top:0;box-shadow:1px 1px 1px #999;text-align:center;font-size:12px;line-height:18px;color:#111;letter-spacing:-.2px">BTCUSD,M5</div>
<span class="tab" style="left:458px;top:602px;letter-spacing:-.7px">XAUUSD,H1</span>
<div class="abs" style="left:359px;top:601px;width:1px;height:22px;background:#aaa"></div>
<svg class="abs" style="left:1880px;top:605px" width="32" height="10"><path d="M6 2L2 5 6 8M26 2L30 5 26 8" stroke="#ccc" fill="none"/></svg>

<!-- toolbox -->
<div class="abs" style="left:0;top:625px;width:1920px;height:1px;background:#a0a0a0"></div>
<div class="abs" style="left:0;top:626px;width:16px;height:185px;background:#9ab6d5"></div>
<svg class="abs" style="left:4px;top:633px" width="10" height="10"><path d="M1 1L8 8M8 1L1 8" stroke="#111" stroke-width="1.500"/></svg>
<table id="tr">
<colgroup><col style="width:159px"><col style="width:140px"><col style="width:110px"><col style="width:93px"><col style="width:155px"><col style="width:154px"><col style="width:156px"><col style="width:155px"><col style="width:140px"><col style="width:155px"><col style="width:385px"><col style="width:99px"></colgroup>
<tr><th>Time&nbsp;&nbsp;&nbsp;&nbsp;&nbsp;&nbsp;&nbsp;&nbsp;<span style="font-size:8px;vertical-align:2px">▲</span></th><th>Symbol</th><th>Ticket</th><th>Type</th><th>Volume</th><th>Price</th><th>S / L</th><th>T / P</th><th>Time</th><th>Price</th><th>Profit</th><th>Change</th></tr>
<tr><td><svg><use href="#rd"/></svg>2025.11.23 05:00:12</td><td>btcusd</td><td>1333115540</td><td>sell</td><td>0.3</td><td>85905.50</td><td class="sl">85695.50</td><td>84404.50</td><td>2025.11.23 09:03:25</td><td>85692.50</td><td class="b">63.90</td><td class="b">0.25 %</td></tr>
<tr class="e"><td><svg><use href="#bd"/></svg>2025.11.23 18:00:11</td><td>btcusd</td><td>1333464212</td><td>buy</td><td>0.3</td><td>87070.50</td><td class="sl">87280.50</td><td>88573.50</td><td>2025.11.23 18:05:20</td><td>87270.50</td><td class="b">60.00</td><td class="b">0.23 %</td></tr>
<tr><td><svg><use href="#rd"/></svg>2025.11.23 18:20:11</td><td>btcusd</td><td>1333475386</td><td>sell</td><td>0.3</td><td>87058.50</td><td class="sl">86848.50</td><td>85558.50</td><td>2025.11.23 18:57:41</td><td>86842.00</td><td class="b">64.95</td><td class="b">0.25 %</td></tr>
<tr class="e"><td><svg><use href="#bd"/></svg>2025.11.23 19:10:11</td><td>btcusd</td><td>1333508726</td><td>buy</td><td>0.3</td><td>86634.50</td><td class="sl">86844.50</td><td>88108.50</td><td>2025.11.23 19:28:38</td><td>86833.50</td><td class="b">59.70</td><td class="b">0.23 %</td></tr>
<tr><td><svg><use href="#rd"/></svg>2025.11.23 23:05:11</td><td>btcusd</td><td>1333612256</td><td>sell</td><td>0.3</td><td>87381.00</td><td class="sl">87171.00</td><td>85875.00</td><td>2025.11.23 23:13:06</td><td>87174.00</td><td class="b">62.10</td><td class="b">0.24 %</td></tr>
<tr class="e"><td><svg><use href="#bd"/></svg>2025.11.24 09:40:30</td><td>btcusd</td><td>1334432931</td><td>buy</td><td>0.3</td><td>87059.00</td><td class="sl">87269.00</td><td>88563.00</td><td>2025.11.24 09:43:45</td><td>87268.00</td><td class="b">62.70</td><td class="b">0.24 %</td></tr>
<tr><td><svg><use href="#rd"/></svg>2025.11.24 10:00:30</td><td>btcusd</td><td>1334474794</td><td>sell</td><td>0.3</td><td>86936.50</td><td class="sl">86726.50</td><td>85434.50</td><td>2025.11.24 10:06:40</td><td>86723.00</td><td class="b">64.05</td><td class="b">0.25 %</td></tr>
</table>
<div class="abs" style="left:18px;top:789px;width:1902px;height:22px;background:#c8c8c8"></div>
<svg class="abs" style="left:21px;top:793px" width="13" height="13"><circle cx="6.500" cy="6.500" r="5.500" fill="none" stroke="#222"/><path d="M3.500 6.500H9.500M6.500 3.500V9.500" stroke="#222"/></svg>
<span class="sum" style="left:39px">Profit: 437.40</span><span class="sum" style="left:121px">Credit: 0.00</span><span class="sum" style="left:192px">Deposit: 0.00</span><span class="sum" style="left:270px">Withdrawal: 0.00</span><span class="sum" style="left:371px">Balance: 437.40</span>
<span class="sum" style="left:1778px">437.40</span>
</body></html>
